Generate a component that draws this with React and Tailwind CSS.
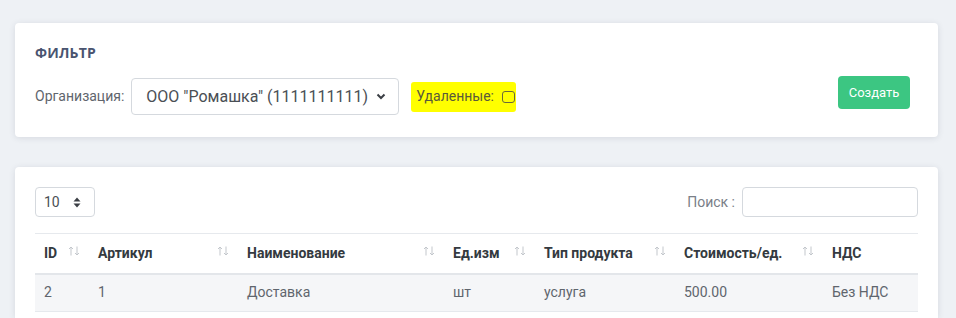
import React from "react";

const columns = [
  { title: "ID", width: "w-[54px]" },
  { title: "Артикул", width: "w-[149px]" },
  { title: "Наименование", width: "w-[206px]" },
  { title: "Ед.изм", width: "w-[91px]" },
  { title: "Тип продукта", width: "w-[140px]" },
  { title: "Стоимость/ед.", width: "w-[148px]" },
  { title: "НДС", width: "w-[95px]" },
];

const rows = [["2", "1", "Доставка", "шт", "услуга", "500.00", "Без НДС"]];

function SortArrows() {
  return (
    <svg width="12" height="10" viewBox="0 0 12 10" fill="none" stroke="#c3c7cc" strokeWidth="1">
      <path d="M3 9.5V1M1 3l2-2 2 2" />
      <path d="M9 0.5V9M7 7l2 2 2-2" />
    </svg>
  );
}

export default function App() {
  return (
    <div
      className="min-h-[318px] w-[956px] bg-[#eef1f5] pt-[23px] pl-[15px] pr-[18px]"
      style={{ fontFamily: 'Roboto, "Noto Sans", sans-serif' }}
    >
      {/* Filter card */}
      <div className="bg-white rounded-[4px] shadow-[0_1px_6px_rgba(40,50,70,0.12)] px-5 pt-5 pb-[22px]">
        <h5
          className="text-[14px] leading-[20px] font-bold text-[#4a5470] tracking-[0.2px]"
          style={{ fontFamily: '"Open Sans", sans-serif' }}
        >
          ФИЛЬТР
        </h5>
        <div className="flex items-center mt-[15px]">
          <span className="text-[14px] text-[#5f656d]">Организация:</span>
          <div className="ml-[7px] shrink-0 w-[268px] h-[37px] border border-[#d5d9de] rounded-[4px] flex items-center justify-between pl-[14px] pr-[12px]">
            <span className="text-[16px] text-[#4a4f55] whitespace-nowrap">ООО "Ромашка" (1111111111)</span>
            <svg width="10" height="7" viewBox="0 0 10 7" fill="none" stroke="#3b3f45" strokeWidth="2">
              <path d="M1.5 1.5l3.5 3.5 3.5-3.5" />
            </svg>
          </div>
          <div className="ml-[12px] shrink-0 h-[30px] w-[105px] bg-[#ffff00] rounded-[3px] flex items-center pl-[5px]">
            <span className="text-[14px] text-[#5a5a3a] whitespace-nowrap">Удаленные:</span>
            <span className="ml-[8px] shrink-0 w-[13px] h-[12px] border border-[#6a6a3a] rounded-[3px]"></span>
          </div>
          <button className="ml-auto mr-[8px] self-start -mt-[2px] h-[33px] w-[72px] rounded-[4px] bg-[#3cc682] text-white text-[13px]">
            Создать
          </button>
        </div>
      </div>

      {/* Table card */}
      <div className="mt-[30px] bg-white rounded-t-[4px] shadow-[0_1px_6px_rgba(40,50,70,0.12)] px-5 pt-5 h-[151px]">
        <div className="flex items-center justify-between">
          <div className="w-[60px] h-[30px] border border-[#d5d9de] rounded-[4px] flex items-center justify-between pl-[8px] pr-[13px]">
            <span className="text-[14px] text-[#4a4f55]">10</span>
            <svg width="8" height="11" viewBox="0 0 8 11" fill="#3b3f45">
              <path d="M4 0.5L7.5 4.5H0.5z" />
              <path d="M4 10.5L7.5 6.5H0.5z" />
            </svg>
          </div>
          <div className="flex items-center">
            <span className="text-[14px] text-[#7a8088]">Поиск :</span>
            <div className="ml-[7px] w-[176px] h-[30px] border border-[#d5d9de] rounded-[4px]"></div>
          </div>
        </div>
        <table className="mt-[16px] w-[883px] table-fixed border-collapse">
          <thead>
            <tr>
              {columns.map((c) => (
                <th
                  key={c.title}
                  className={`${c.width} h-[40px] border-t border-[#e6e9ed] border-b-2 border-b-[#e3e6ea] px-[9px] text-left`}
                >
                  <div className="flex items-center justify-between">
                    <span className="text-[14px] font-bold text-[#343a40]">{c.title}</span>
                    {c.title !== "НДС" && (
                      <span className="-mt-[4px]">
                        <SortArrows />
                      </span>
                    )}
                  </div>
                </th>
              ))}
            </tr>
          </thead>
          <tbody>
            {rows.map((r, i) => (
              <tr key={i} className="bg-[#f5f6f8]">
                {r.map((cell, j) => (
                  <td
                    key={j}
                    className="h-[38px] px-[9px] border-b border-[#e6e9ed] text-[14px] text-[#5f656d]"
                  >
                    {cell}
                  </td>
                ))}
              </tr>
            ))}
          </tbody>
        </table>
      </div>
    </div>
  );
}
